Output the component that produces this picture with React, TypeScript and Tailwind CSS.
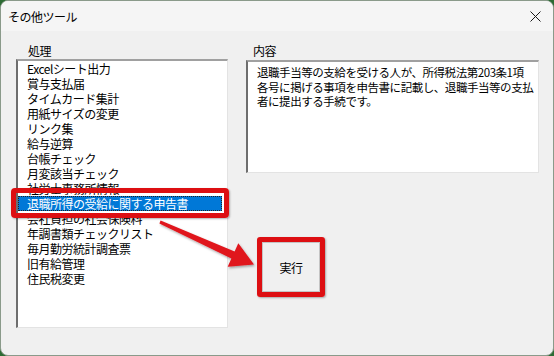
import React from "react";

const items = [
  "Excelシート出力",
  "賞与支払届",
  "タイムカード集計",
  "用紙サイズの変更",
  "リンク集",
  "給与逆算",
  "台帳チェック",
  "月変該当チェック",
  "社労士事務所情報",
  "退職所得の受給に関する申告書",
  "会社負担の社会保険料",
  "年調書類チェックリスト",
  "毎月勤労統計調査票",
  "旧有給管理",
  "住民税変更",
];

const SELECTED = 9;

const sunken =
  "border-t-2 border-l-2 border-r border-b border-t-[#a0a0a0] border-l-[#6e6e6e] border-r-[#e3e3e3] border-b-[#e3e3e3] bg-white";

function Arrow() {
  return (
    <svg
      className="absolute inset-0 pointer-events-none"
      width="554"
      height="356"
      viewBox="0 0 554 356"
    >
      <defs>
        <filter id="sh" x="-20%" y="-20%" width="140%" height="140%">
          <feDropShadow dx="1" dy="1.5" stdDeviation="1" floodColor="#000" floodOpacity="0.35" />
        </filter>
      </defs>
      <polygon
        filter="url(#sh)"
        fill="#e0141b"
        points="160.6,220.6 234.6,251.4 238.3,243.2 254,264.5 227.7,266.8 231.4,258.6 159.4,223.4"
      />
    </svg>
  );
}

export default function App() {
  return (
    <div
      className="w-[554px] h-[356px] bg-[#2d6b34] relative overflow-hidden"
      style={{ fontFamily: '"Noto Sans CJK JP", "Noto Sans", sans-serif' }}
    >
      <div className="w-full h-full rounded-[8px] bg-[#f0f0f0] border border-[#8a9a8a] flex flex-col overflow-hidden">
        {/* title bar */}
        <div className="h-[30px] bg-[#f5f5f5] flex items-center justify-between pl-[7px] pr-[12px] shrink-0">
          <span className="text-[12px] leading-[15px] text-black tracking-[-0.5px]">その他ツール</span>
          <svg width="11" height="11" viewBox="0 0 11 11">
            <path d="M0.5 0.5 L10.5 10.5 M10.5 0.5 L0.5 10.5" stroke="#1a1a1a" strokeWidth="1" />
          </svg>
        </div>

        {/* body */}
        <div className="flex pt-[11px] pl-[15px] gap-[18px] text-[12px] leading-[15px] text-black tracking-[-0.5px]">
          <div className="w-[212px] flex flex-col">
            <div className="h-[17px] leading-[17px] pl-[12px]">処理</div>
            <div className={`${sunken} h-[269px] flex flex-col`}>
              {items.map((it, i) => (
                <div
                  key={it}
                  className={
                    i === SELECTED
                      ? "h-[15px] pl-[9px] mr-[5px] bg-[#0078d7] text-white outline-1 outline-dotted outline-[#222] -outline-offset-1 whitespace-nowrap"
                      : "h-[15px] pl-[9px] whitespace-nowrap"
                  }
                >
                  {it}
                </div>
              ))}
            </div>
          </div>

          <div className="w-[293px] flex flex-col">
            <div className="h-[18px] leading-[17px] pl-[7px]">内容</div>
            <div className={`${sunken} h-[113px] pl-[9px] pt-[3px] text-[11.5px] leading-[14.5px] tracking-[-0.45px]`}>
              <div className="whitespace-nowrap">退職手当等の支給を受ける人が、所得税法第203条1項</div>
              <div className="whitespace-nowrap">各号に掲げる事項を申告書に記載し、退職手当等の支払</div>
              <div className="whitespace-nowrap">者に提出する手続です。</div>
            </div>
            <div className="mt-[69px] ml-[16px] relative w-[58px] h-[50px]">
              <button className="w-full h-full bg-[#f0f0f0] border border-[#c4c4c4] text-[12px] flex items-center justify-center">
                実行
              </button>
              <div className="absolute -inset-[5px] border-[5px] border-[#dd0f12] rounded-[3px] shadow-[1px_1px_2px_rgba(0,0,0,0.3)]" />
            </div>
          </div>
        </div>
      </div>

      {/* annotation on the selected row */}
      <div className="absolute left-[11px] top-[188px] w-[218px] h-[30px] border-[5px] border-[#dd0f12] rounded-[4px] shadow-[1px_1px_2px_rgba(0,0,0,0.3)] pointer-events-none" />
      <Arrow />
    </div>
  );
}
